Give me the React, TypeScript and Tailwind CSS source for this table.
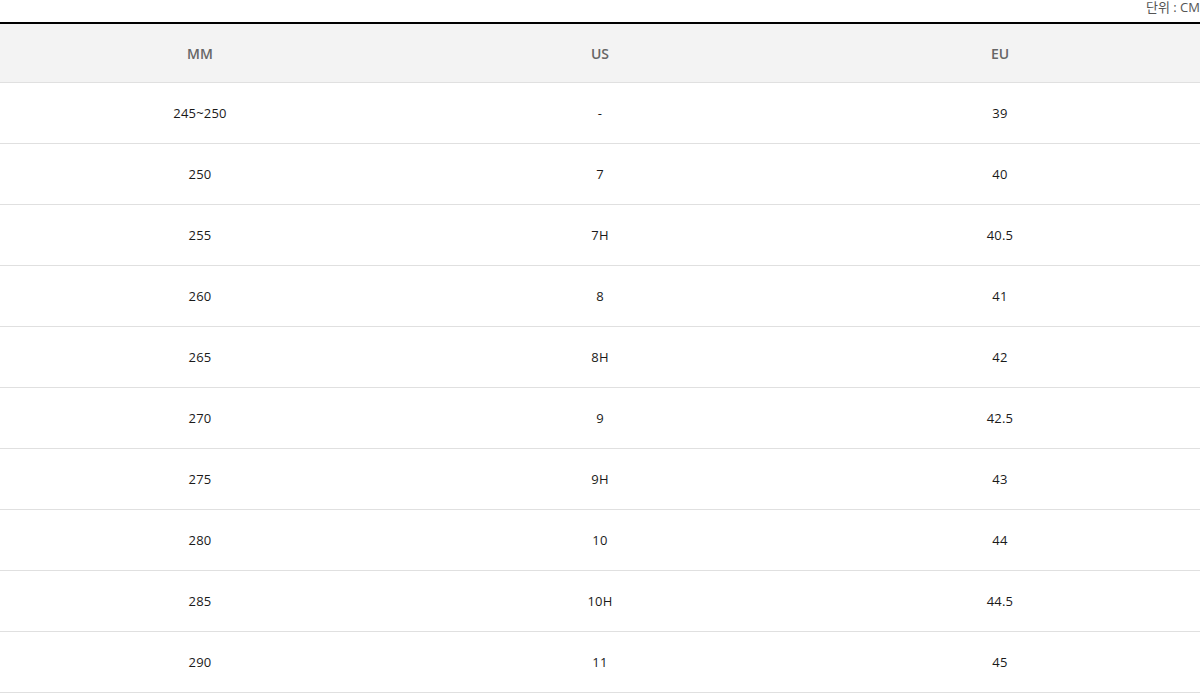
import React from "react";

const rows: [string, string, string][] = [
  ["245~250", "-", "39"],
  ["250", "7", "40"],
  ["255", "7H", "40.5"],
  ["260", "8", "41"],
  ["265", "8H", "42"],
  ["270", "9", "42.5"],
  ["275", "9H", "43"],
  ["280", "10", "44"],
  ["285", "10H", "44.5"],
  ["290", "11", "45"],
];

export default function App() {
  return (
    <div className="w-[1200px] bg-white font-['Open_Sans','Noto_Sans_CJK_KR',sans-serif]">
      <div className="h-[22px] text-right text-[13px] leading-[15px] text-[#555]">단위 : CM</div>
      <div className="border-t-2 border-black">
        <div className="grid grid-cols-3 h-[59px] bg-[#f3f3f3] border-b border-[#e0e0e0]">
          {["MM", "US", "EU"].map((h) => (
            <div key={h} className="flex items-center justify-center text-[14px] font-semibold text-[#666]">
              {h}
            </div>
          ))}
        </div>
        {rows.map((r, i) => (
          <div key={i} className="grid grid-cols-3 h-[61px] pt-[2px] border-b border-[#e0e0e0]">
            {r.map((c, j) => (
              <div key={j} className="flex items-center justify-center text-[13px] tracking-[0.2px] text-[#1a1a1a]">
                {c}
              </div>
            ))}
          </div>
        ))}
      </div>
    </div>
  );
}
